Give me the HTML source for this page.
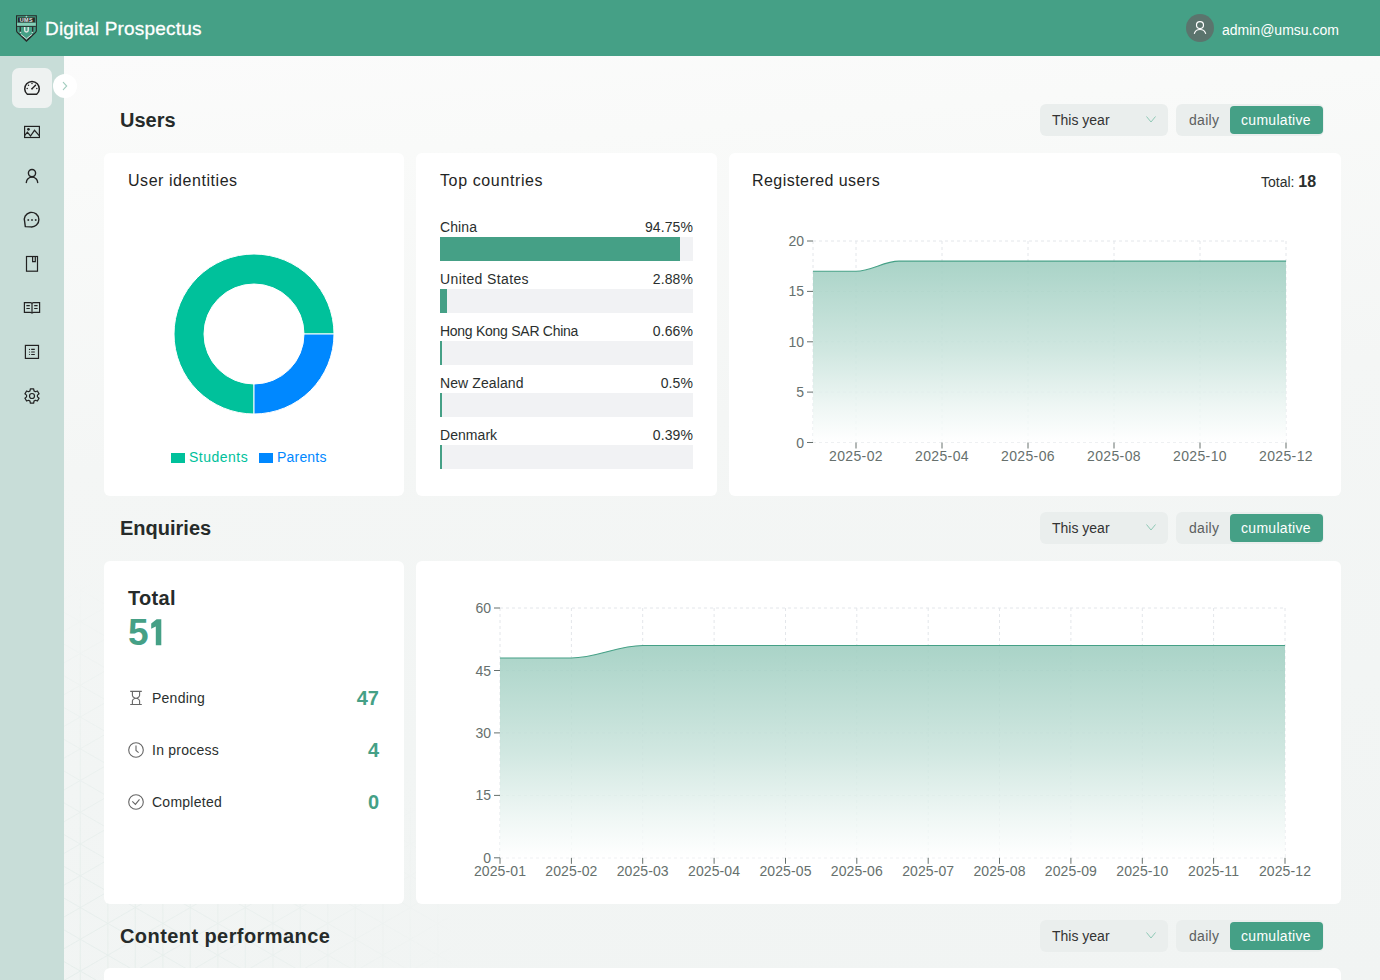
<!DOCTYPE html>
<html><head><meta charset="utf-8"><title>Digital Prospectus</title>
<style>
*{box-sizing:border-box;margin:0;padding:0}
html,body{width:1380px;height:980px;overflow:hidden}
body{font-family:"Liberation Sans",sans-serif;color:#1f2524;background:#f5f7f6;position:relative}
.abs{position:absolute}
#hdr{left:0;top:0;width:1380px;height:56px;background:#45a086}
#side{left:0;top:56px;width:64px;height:924px;background:#c8ddd8}
#main{left:64px;top:56px;width:1316px;height:924px;background:linear-gradient(175deg,#fbfbfb 0%,#f9faf9 12%,#f4f6f5 40%,#f2f5f4 70%,#f1f4f3 100%)}
.card{position:absolute;background:#fff;border-radius:6px}
.t{position:absolute;white-space:nowrap;line-height:1}
.sec{font-size:20px;font-weight:bold;color:#262b2a}
.ctitle{font-size:16px;color:#1f2524;letter-spacing:0.45px}
.sel{position:absolute;width:128px;height:32px;background:#eaeeed;border-radius:6px}
.seg{position:absolute;width:148px;height:32px;background:#eaeeed;border-radius:6px}
.cum{position:absolute;left:54px;top:2px;width:93px;height:28px;background:#45a086;border-radius:4px}
.lbl{font-size:14px;color:#2a2f2e;letter-spacing:0.1px}
.pct{font-size:14px;color:#2a2f2e;letter-spacing:0.1px;text-align:right}
</style></head><body>
<div id="hdr" class="abs"></div><div id="side" class="abs"></div><div id="main" class="abs"></div>
<div class="t" style="left:45px;top:19px;font-size:19px;color:#fff;letter-spacing:0.2px;-webkit-text-stroke:0.3px #fff">Digital Prospectus</div>
<div class="abs" style="left:1186px;top:14px;width:28px;height:28px;border-radius:50%;background:#5b746d"></div>
<div class="t" style="left:1222px;top:23px;font-size:14px;color:#fff">admin@umsu.com</div>
<div class="abs" style="left:12px;top:68px;width:40px;height:40px;border-radius:7px;background:#eef2f1"></div>
<div class="abs" style="left:53px;top:74px;width:24px;height:24px;border-radius:50%;background:#fff"></div>
<svg class="abs" style="left:0;top:0" width="1380" height="980"><defs><radialGradient id="pm" cx="64" cy="980" r="400" gradientUnits="userSpaceOnUse"><stop offset="0" stop-color="#fff" stop-opacity="1"/><stop offset="0.55" stop-color="#fff" stop-opacity="0.6"/><stop offset="1" stop-color="#fff" stop-opacity="0"/></radialGradient><mask id="pmask"><rect x="0" y="0" width="1380" height="980" fill="url(#pm)"/></mask></defs><path d="M80.3 400V980 M107.8 400V980 M135.3 400V980 M162.8 400V980 M190.3 400V980 M217.8 400V980 M245.3 400V980 M272.8 400V980 M300.3 400V980 M327.8 400V980 M355.3 400V980 M382.8 400V980 M410.3 400V980 M437.8 400V980 M465.3 400V980 M492.8 400V980 M520.3 400V980 M547.8 400V980 M64 72.5L560 358.9 M64 104.3L560 390.6 M64 136.0L560 422.4 M64 167.8L560 454.1 M64 199.5L560 485.9 M64 231.3L560 517.7 M64 263.0L560 549.4 M64 294.8L560 581.2 M64 326.6L560 612.9 M64 358.3L560 644.7 M64 377.1L560 90.8 M64 390.1L560 676.4 M64 408.9L560 122.5 M64 421.8L560 708.2 M64 440.6L560 154.3 M64 453.6L560 739.9 M64 472.4L560 186.0 M64 485.3L560 771.7 M64 504.1L560 217.8 M64 517.1L560 803.4 M64 535.9L560 249.5 M64 548.8L560 835.2 M64 567.7L560 281.3 M64 580.6L560 867.0 M64 599.4L560 313.0 M64 612.3L560 898.7 M64 631.2L560 344.8 M64 644.1L560 930.5 M64 662.9L560 376.6 M64 675.9L560 962.2 M64 694.7L560 408.3 M64 707.6L560 994.0 M64 726.4L560 440.1 M64 739.4L560 1025.7 M64 758.2L560 471.8 M64 771.1L560 1057.5 M64 789.9L560 503.6 M64 802.9L560 1089.2 M64 821.7L560 535.3 M64 834.6L560 1121.0 M64 853.4L560 567.1 M64 866.4L560 1152.7 M64 885.2L560 598.8 M64 898.1L560 1184.5 M64 917.0L560 630.6 M64 929.9L560 1216.3 M64 948.7L560 662.3 M64 961.6L560 1248.0 M64 980.5L560 694.1 M64 993.4L560 1279.8 M64 1012.2L560 725.9 M64 1025.1L560 1311.5 M64 1044.0L560 757.6 M64 1075.7L560 789.4 M64 1107.5L560 821.1 M64 1139.2L560 852.9 M64 1171.0L560 884.6 M64 1202.7L560 916.4 M64 1234.5L560 948.1 M64 1266.3L560 979.9 M64 1298.0L560 1011.6" stroke="#e3ecea" stroke-width="0.8" fill="none" mask="url(#pmask)"/></svg>
<div class="t sec" style="left:120px;top:110px;letter-spacing:0px">Users</div>
<div class="sel" style="left:1040px;top:104px"></div>
<div class="t" style="left:1052px;top:113px;font-size:14px;color:#333">This year</div>
<div class="seg" style="left:1176px;top:104px"><div class="cum"></div></div>
<div class="t" style="left:1189px;top:113px;font-size:14px;color:#5c605f;letter-spacing:0.3px">daily</div>
<div class="t" style="left:1241px;top:113px;font-size:14px;color:#fff;letter-spacing:0.3px">cumulative</div>
<div class="card" style="left:104px;top:152.5px;width:300.25px;height:343.5px"></div>
<div class="card" style="left:416.25px;top:152.5px;width:300.25px;height:343.5px"></div>
<div class="card" style="left:728.5px;top:152.5px;width:612.5px;height:343.5px"></div>
<div class="t ctitle" style="left:128px;top:173px;letter-spacing:0.55px">User identities</div>
<div class="t ctitle" style="left:440px;top:173px;letter-spacing:0.62px">Top countries</div>
<div class="t ctitle" style="left:752px;top:173px">Registered users</div>
<div class="t" style="left:1261px;top:174px;font-size:14px;color:#2a2f2e">Total: <b style="font-size:16px">18</b></div>
<div class="t lbl" style="left:440px;top:220px;letter-spacing:0.1px">China</div>
<div class="t pct" style="left:593px;width:100px;top:220px">94.75%</div>
<div class="abs" style="left:440px;top:237px;width:253px;height:24px;background:#f1f2f4"></div>
<div class="abs" style="left:440px;top:237px;width:239.72px;height:24px;background:#45a086"></div>
<div class="t lbl" style="left:440px;top:272px;letter-spacing:0.38px">United States</div>
<div class="t pct" style="left:593px;width:100px;top:272px">2.88%</div>
<div class="abs" style="left:440px;top:289px;width:253px;height:24px;background:#f1f2f4"></div>
<div class="abs" style="left:440px;top:289px;width:7.29px;height:24px;background:#45a086"></div>
<div class="t lbl" style="left:440px;top:324px;letter-spacing:-0.27px">Hong Kong SAR China</div>
<div class="t pct" style="left:593px;width:100px;top:324px">0.66%</div>
<div class="abs" style="left:440px;top:341px;width:253px;height:24px;background:#f1f2f4"></div>
<div class="abs" style="left:440px;top:341px;width:1.67px;height:24px;background:#45a086"></div>
<div class="t lbl" style="left:440px;top:376px;letter-spacing:0.1px">New Zealand</div>
<div class="t pct" style="left:593px;width:100px;top:376px">0.5%</div>
<div class="abs" style="left:440px;top:393px;width:253px;height:24px;background:#f1f2f4"></div>
<div class="abs" style="left:440px;top:393px;width:1.50px;height:24px;background:#45a086"></div>
<div class="t lbl" style="left:440px;top:428px;letter-spacing:0.05px">Denmark</div>
<div class="t pct" style="left:593px;width:100px;top:428px">0.39%</div>
<div class="abs" style="left:440px;top:445px;width:253px;height:24px;background:#f1f2f4"></div>
<div class="abs" style="left:440px;top:445px;width:1.50px;height:24px;background:#45a086"></div>
<div class="abs" style="left:171px;top:453px;width:14px;height:10px;background:#00c19b"></div>
<div class="t" style="left:189px;top:450px;font-size:14px;color:#00c19b;letter-spacing:0.5px">Students</div>
<div class="abs" style="left:259px;top:453px;width:14px;height:10px;background:#0088ff"></div>
<div class="t" style="left:277px;top:450px;font-size:14px;color:#0088ff;letter-spacing:0.2px">Parents</div>
<div class="t sec" style="left:120px;top:518px;letter-spacing:0px">Enquiries</div>
<div class="sel" style="left:1040px;top:512px"></div>
<div class="t" style="left:1052px;top:521px;font-size:14px;color:#333">This year</div>
<div class="seg" style="left:1176px;top:512px"><div class="cum"></div></div>
<div class="t" style="left:1189px;top:521px;font-size:14px;color:#5c605f;letter-spacing:0.3px">daily</div>
<div class="t" style="left:1241px;top:521px;font-size:14px;color:#fff;letter-spacing:0.3px">cumulative</div>
<div class="card" style="left:104px;top:560.5px;width:300.25px;height:343.5px"></div>
<div class="card" style="left:416.25px;top:560.5px;width:924.75px;height:343.5px"></div>
<div class="t" style="left:128px;top:588px;font-size:20px;font-weight:bold;letter-spacing:0.3px;color:#262b2a">Total</div>
<div class="t" style="left:128px;top:614px;font-size:37px;font-weight:bold;color:#45a086">5</div>
<svg class="abs" style="left:0;top:0" width="400" height="700"><path d="M156.6 619.3 H161.3 V645.3 H155.8 V626.4 L151.2 628.7 V623.5 Z" fill="#45a086"/></svg>
<div class="t" style="left:152px;top:691px;font-size:14px;color:#2a2f2e;letter-spacing:0.25px">Pending</div>
<div class="t" style="left:279px;width:100px;text-align:right;top:688px;font-size:20px;font-weight:bold;color:#45a086">47</div>
<div class="t" style="left:152px;top:743px;font-size:14px;color:#2a2f2e;letter-spacing:0.25px">In process</div>
<div class="t" style="left:279px;width:100px;text-align:right;top:740px;font-size:20px;font-weight:bold;color:#45a086">4</div>
<div class="t" style="left:152px;top:795px;font-size:14px;color:#2a2f2e;letter-spacing:0.25px">Completed</div>
<div class="t" style="left:279px;width:100px;text-align:right;top:792px;font-size:20px;font-weight:bold;color:#45a086">0</div>
<div class="t sec" style="left:120px;top:926px;letter-spacing:0.42px">Content performance</div>
<div class="sel" style="left:1040px;top:920px"></div>
<div class="t" style="left:1052px;top:929px;font-size:14px;color:#333">This year</div>
<div class="seg" style="left:1176px;top:920px"><div class="cum"></div></div>
<div class="t" style="left:1189px;top:929px;font-size:14px;color:#5c605f;letter-spacing:0.3px">daily</div>
<div class="t" style="left:1241px;top:929px;font-size:14px;color:#fff;letter-spacing:0.3px">cumulative</div>
<div class="card" style="left:104px;top:968px;width:1237px;height:40px"></div>
<svg class="abs" style="left:0;top:0" width="1380" height="980" viewBox="0 0 1380 980">
<defs><linearGradient id="ag" x1="0" y1="0" x2="0" y2="1"><stop offset="0" stop-color="#45a086" stop-opacity="0.46"/><stop offset="0.5" stop-color="#45a086" stop-opacity="0.25"/><stop offset="0.8" stop-color="#45a086" stop-opacity="0.09"/><stop offset="1" stop-color="#45a086" stop-opacity="0"/></linearGradient></defs>
<path d="M254 414 A80 80 0 1 1 334 334 L304 334 A50 50 0 1 0 254 384 Z" fill="#00c19b" stroke="#fff" stroke-width="1"/>
<path d="M334 334 A80 80 0 0 1 254 414 L254 384 A50 50 0 0 0 304 334 Z" fill="#0088ff" stroke="#fff" stroke-width="1"/>
<line x1="813.0" y1="241" x2="813.0" y2="442.5" stroke="#e3e6ea" stroke-dasharray="3 3"/>
<line x1="856.0" y1="241" x2="856.0" y2="442.5" stroke="#e3e6ea" stroke-dasharray="3 3"/>
<line x1="942.0" y1="241" x2="942.0" y2="442.5" stroke="#e3e6ea" stroke-dasharray="3 3"/>
<line x1="1028.0" y1="241" x2="1028.0" y2="442.5" stroke="#e3e6ea" stroke-dasharray="3 3"/>
<line x1="1114.0" y1="241" x2="1114.0" y2="442.5" stroke="#e3e6ea" stroke-dasharray="3 3"/>
<line x1="1200.0" y1="241" x2="1200.0" y2="442.5" stroke="#e3e6ea" stroke-dasharray="3 3"/>
<line x1="1286.0" y1="241" x2="1286.0" y2="442.5" stroke="#e3e6ea" stroke-dasharray="3 3"/>
<line x1="813" y1="442.5" x2="1286" y2="442.5" stroke="#e3e6ea" stroke-dasharray="3 3"/>
<line x1="813" y1="392.1" x2="1286" y2="392.1" stroke="#e3e6ea" stroke-dasharray="3 3"/>
<line x1="813" y1="341.8" x2="1286" y2="341.8" stroke="#e3e6ea" stroke-dasharray="3 3"/>
<line x1="813" y1="291.4" x2="1286" y2="291.4" stroke="#e3e6ea" stroke-dasharray="3 3"/>
<line x1="813" y1="241.0" x2="1286" y2="241.0" stroke="#e3e6ea" stroke-dasharray="3 3"/>
<path d="M813.00 271.23 C828.05 271.23 840.95 271.23 856.00 271.23 C871.05 271.23 883.95 261.15 899.00 261.15 C914.05 261.15 926.95 261.15 942.00 261.15 C957.05 261.15 969.95 261.15 985.00 261.15 C1000.05 261.15 1012.95 261.15 1028.00 261.15 C1043.05 261.15 1055.95 261.15 1071.00 261.15 C1086.05 261.15 1098.95 261.15 1114.00 261.15 C1129.05 261.15 1141.95 261.15 1157.00 261.15 C1172.05 261.15 1184.95 261.15 1200.00 261.15 C1215.05 261.15 1227.95 261.15 1243.00 261.15 C1258.05 261.15 1270.95 261.15 1286.00 261.15 L1286 442.5 L813 442.5 Z" fill="#fff" fill-opacity="0.8"/>
<path d="M813.00 271.23 C828.05 271.23 840.95 271.23 856.00 271.23 C871.05 271.23 883.95 261.15 899.00 261.15 C914.05 261.15 926.95 261.15 942.00 261.15 C957.05 261.15 969.95 261.15 985.00 261.15 C1000.05 261.15 1012.95 261.15 1028.00 261.15 C1043.05 261.15 1055.95 261.15 1071.00 261.15 C1086.05 261.15 1098.95 261.15 1114.00 261.15 C1129.05 261.15 1141.95 261.15 1157.00 261.15 C1172.05 261.15 1184.95 261.15 1200.00 261.15 C1215.05 261.15 1227.95 261.15 1243.00 261.15 C1258.05 261.15 1270.95 261.15 1286.00 261.15 L1286 442.5 L813 442.5 Z" fill="url(#ag)"/>
<path d="M813.00 271.23 C828.05 271.23 840.95 271.23 856.00 271.23 C871.05 271.23 883.95 261.15 899.00 261.15 C914.05 261.15 926.95 261.15 942.00 261.15 C957.05 261.15 969.95 261.15 985.00 261.15 C1000.05 261.15 1012.95 261.15 1028.00 261.15 C1043.05 261.15 1055.95 261.15 1071.00 261.15 C1086.05 261.15 1098.95 261.15 1114.00 261.15 C1129.05 261.15 1141.95 261.15 1157.00 261.15 C1172.05 261.15 1184.95 261.15 1200.00 261.15 C1215.05 261.15 1227.95 261.15 1243.00 261.15 C1258.05 261.15 1270.95 261.15 1286.00 261.15" fill="none" stroke="#45a086" stroke-width="1.15"/>
<line x1="807" y1="442.5" x2="813" y2="442.5" stroke="#66706d"/>
<text x="804" y="447.5" text-anchor="end" font-size="14" fill="#66706d" font-family="Liberation Sans">0</text>
<line x1="807" y1="392.1" x2="813" y2="392.1" stroke="#66706d"/>
<text x="804" y="397.1" text-anchor="end" font-size="14" fill="#66706d" font-family="Liberation Sans">5</text>
<line x1="807" y1="341.8" x2="813" y2="341.8" stroke="#66706d"/>
<text x="804" y="346.8" text-anchor="end" font-size="14" fill="#66706d" font-family="Liberation Sans">10</text>
<line x1="807" y1="291.4" x2="813" y2="291.4" stroke="#66706d"/>
<text x="804" y="296.4" text-anchor="end" font-size="14" fill="#66706d" font-family="Liberation Sans">15</text>
<line x1="807" y1="241.0" x2="813" y2="241.0" stroke="#66706d"/>
<text x="804" y="246.0" text-anchor="end" font-size="14" fill="#66706d" font-family="Liberation Sans">20</text>
<line x1="856.0" y1="442.5" x2="856.0" y2="448.5" stroke="#66706d"/>
<text x="856.0" y="461" text-anchor="middle" font-size="14" letter-spacing="0.35" fill="#66706d" font-family="Liberation Sans">2025-02</text>
<line x1="942.0" y1="442.5" x2="942.0" y2="448.5" stroke="#66706d"/>
<text x="942.0" y="461" text-anchor="middle" font-size="14" letter-spacing="0.35" fill="#66706d" font-family="Liberation Sans">2025-04</text>
<line x1="1028.0" y1="442.5" x2="1028.0" y2="448.5" stroke="#66706d"/>
<text x="1028.0" y="461" text-anchor="middle" font-size="14" letter-spacing="0.35" fill="#66706d" font-family="Liberation Sans">2025-06</text>
<line x1="1114.0" y1="442.5" x2="1114.0" y2="448.5" stroke="#66706d"/>
<text x="1114.0" y="461" text-anchor="middle" font-size="14" letter-spacing="0.35" fill="#66706d" font-family="Liberation Sans">2025-08</text>
<line x1="1200.0" y1="442.5" x2="1200.0" y2="448.5" stroke="#66706d"/>
<text x="1200.0" y="461" text-anchor="middle" font-size="14" letter-spacing="0.35" fill="#66706d" font-family="Liberation Sans">2025-10</text>
<line x1="1286.0" y1="442.5" x2="1286.0" y2="448.5" stroke="#66706d"/>
<text x="1286.0" y="461" text-anchor="middle" font-size="14" letter-spacing="0.35" fill="#66706d" font-family="Liberation Sans">2025-12</text>
<line x1="500.0" y1="608" x2="500.0" y2="857.8" stroke="#e3e6ea" stroke-dasharray="3 3"/>
<line x1="571.4" y1="608" x2="571.4" y2="857.8" stroke="#e3e6ea" stroke-dasharray="3 3"/>
<line x1="642.7" y1="608" x2="642.7" y2="857.8" stroke="#e3e6ea" stroke-dasharray="3 3"/>
<line x1="714.1" y1="608" x2="714.1" y2="857.8" stroke="#e3e6ea" stroke-dasharray="3 3"/>
<line x1="785.5" y1="608" x2="785.5" y2="857.8" stroke="#e3e6ea" stroke-dasharray="3 3"/>
<line x1="856.8" y1="608" x2="856.8" y2="857.8" stroke="#e3e6ea" stroke-dasharray="3 3"/>
<line x1="928.2" y1="608" x2="928.2" y2="857.8" stroke="#e3e6ea" stroke-dasharray="3 3"/>
<line x1="999.5" y1="608" x2="999.5" y2="857.8" stroke="#e3e6ea" stroke-dasharray="3 3"/>
<line x1="1070.9" y1="608" x2="1070.9" y2="857.8" stroke="#e3e6ea" stroke-dasharray="3 3"/>
<line x1="1142.3" y1="608" x2="1142.3" y2="857.8" stroke="#e3e6ea" stroke-dasharray="3 3"/>
<line x1="1213.6" y1="608" x2="1213.6" y2="857.8" stroke="#e3e6ea" stroke-dasharray="3 3"/>
<line x1="1285.0" y1="608" x2="1285.0" y2="857.8" stroke="#e3e6ea" stroke-dasharray="3 3"/>
<line x1="500" y1="857.8" x2="1285" y2="857.8" stroke="#e3e6ea" stroke-dasharray="3 3"/>
<line x1="500" y1="795.4" x2="1285" y2="795.4" stroke="#e3e6ea" stroke-dasharray="3 3"/>
<line x1="500" y1="732.9" x2="1285" y2="732.9" stroke="#e3e6ea" stroke-dasharray="3 3"/>
<line x1="500" y1="670.5" x2="1285" y2="670.5" stroke="#e3e6ea" stroke-dasharray="3 3"/>
<line x1="500" y1="608.0" x2="1285" y2="608.0" stroke="#e3e6ea" stroke-dasharray="3 3"/>
<path d="M500.00 657.96 C524.98 657.96 546.39 657.96 571.36 657.96 C596.34 657.96 617.75 645.47 642.73 645.47 C667.70 645.47 689.11 645.47 714.09 645.47 C739.07 645.47 760.48 645.47 785.45 645.47 C810.43 645.47 831.84 645.47 856.82 645.47 C881.80 645.47 903.20 645.47 928.18 645.47 C953.16 645.47 974.57 645.47 999.55 645.47 C1024.52 645.47 1045.93 645.47 1070.91 645.47 C1095.89 645.47 1117.30 645.47 1142.27 645.47 C1167.25 645.47 1188.66 645.47 1213.64 645.47 C1238.61 645.47 1260.02 645.47 1285.00 645.47 L1285 857.8 L500 857.8 Z" fill="#fff" fill-opacity="0.8"/>
<path d="M500.00 657.96 C524.98 657.96 546.39 657.96 571.36 657.96 C596.34 657.96 617.75 645.47 642.73 645.47 C667.70 645.47 689.11 645.47 714.09 645.47 C739.07 645.47 760.48 645.47 785.45 645.47 C810.43 645.47 831.84 645.47 856.82 645.47 C881.80 645.47 903.20 645.47 928.18 645.47 C953.16 645.47 974.57 645.47 999.55 645.47 C1024.52 645.47 1045.93 645.47 1070.91 645.47 C1095.89 645.47 1117.30 645.47 1142.27 645.47 C1167.25 645.47 1188.66 645.47 1213.64 645.47 C1238.61 645.47 1260.02 645.47 1285.00 645.47 L1285 857.8 L500 857.8 Z" fill="url(#ag)"/>
<path d="M500.00 657.96 C524.98 657.96 546.39 657.96 571.36 657.96 C596.34 657.96 617.75 645.47 642.73 645.47 C667.70 645.47 689.11 645.47 714.09 645.47 C739.07 645.47 760.48 645.47 785.45 645.47 C810.43 645.47 831.84 645.47 856.82 645.47 C881.80 645.47 903.20 645.47 928.18 645.47 C953.16 645.47 974.57 645.47 999.55 645.47 C1024.52 645.47 1045.93 645.47 1070.91 645.47 C1095.89 645.47 1117.30 645.47 1142.27 645.47 C1167.25 645.47 1188.66 645.47 1213.64 645.47 C1238.61 645.47 1260.02 645.47 1285.00 645.47" fill="none" stroke="#45a086" stroke-width="1.15"/>
<line x1="494" y1="857.8" x2="500" y2="857.8" stroke="#66706d"/>
<text x="491" y="862.8" text-anchor="end" font-size="14" fill="#66706d" font-family="Liberation Sans">0</text>
<line x1="494" y1="795.4" x2="500" y2="795.4" stroke="#66706d"/>
<text x="491" y="800.4" text-anchor="end" font-size="14" fill="#66706d" font-family="Liberation Sans">15</text>
<line x1="494" y1="732.9" x2="500" y2="732.9" stroke="#66706d"/>
<text x="491" y="737.9" text-anchor="end" font-size="14" fill="#66706d" font-family="Liberation Sans">30</text>
<line x1="494" y1="670.5" x2="500" y2="670.5" stroke="#66706d"/>
<text x="491" y="675.5" text-anchor="end" font-size="14" fill="#66706d" font-family="Liberation Sans">45</text>
<line x1="494" y1="608.0" x2="500" y2="608.0" stroke="#66706d"/>
<text x="491" y="613.0" text-anchor="end" font-size="14" fill="#66706d" font-family="Liberation Sans">60</text>
<line x1="500.0" y1="857.8" x2="500.0" y2="863.8" stroke="#66706d"/>
<text x="500.0" y="876" text-anchor="middle" font-size="14" letter-spacing="0.1" fill="#66706d" font-family="Liberation Sans">2025-01</text>
<line x1="571.4" y1="857.8" x2="571.4" y2="863.8" stroke="#66706d"/>
<text x="571.4" y="876" text-anchor="middle" font-size="14" letter-spacing="0.1" fill="#66706d" font-family="Liberation Sans">2025-02</text>
<line x1="642.7" y1="857.8" x2="642.7" y2="863.8" stroke="#66706d"/>
<text x="642.7" y="876" text-anchor="middle" font-size="14" letter-spacing="0.1" fill="#66706d" font-family="Liberation Sans">2025-03</text>
<line x1="714.1" y1="857.8" x2="714.1" y2="863.8" stroke="#66706d"/>
<text x="714.1" y="876" text-anchor="middle" font-size="14" letter-spacing="0.1" fill="#66706d" font-family="Liberation Sans">2025-04</text>
<line x1="785.5" y1="857.8" x2="785.5" y2="863.8" stroke="#66706d"/>
<text x="785.5" y="876" text-anchor="middle" font-size="14" letter-spacing="0.1" fill="#66706d" font-family="Liberation Sans">2025-05</text>
<line x1="856.8" y1="857.8" x2="856.8" y2="863.8" stroke="#66706d"/>
<text x="856.8" y="876" text-anchor="middle" font-size="14" letter-spacing="0.1" fill="#66706d" font-family="Liberation Sans">2025-06</text>
<line x1="928.2" y1="857.8" x2="928.2" y2="863.8" stroke="#66706d"/>
<text x="928.2" y="876" text-anchor="middle" font-size="14" letter-spacing="0.1" fill="#66706d" font-family="Liberation Sans">2025-07</text>
<line x1="999.5" y1="857.8" x2="999.5" y2="863.8" stroke="#66706d"/>
<text x="999.5" y="876" text-anchor="middle" font-size="14" letter-spacing="0.1" fill="#66706d" font-family="Liberation Sans">2025-08</text>
<line x1="1070.9" y1="857.8" x2="1070.9" y2="863.8" stroke="#66706d"/>
<text x="1070.9" y="876" text-anchor="middle" font-size="14" letter-spacing="0.1" fill="#66706d" font-family="Liberation Sans">2025-09</text>
<line x1="1142.3" y1="857.8" x2="1142.3" y2="863.8" stroke="#66706d"/>
<text x="1142.3" y="876" text-anchor="middle" font-size="14" letter-spacing="0.1" fill="#66706d" font-family="Liberation Sans">2025-10</text>
<line x1="1213.6" y1="857.8" x2="1213.6" y2="863.8" stroke="#66706d"/>
<text x="1213.6" y="876" text-anchor="middle" font-size="14" letter-spacing="0.1" fill="#66706d" font-family="Liberation Sans">2025-11</text>
<line x1="1285.0" y1="857.8" x2="1285.0" y2="863.8" stroke="#66706d"/>
<text x="1285.0" y="876" text-anchor="middle" font-size="14" letter-spacing="0.1" fill="#66706d" font-family="Liberation Sans">2025-12</text>
<g fill="none" stroke="#222" stroke-width="1.3" stroke-linecap="round" stroke-linejoin="round">
<path d="M27.3 94.3 A7.3 7.3 0 1 1 36.7 94.3 Z" stroke-width="1.5"/>
<path d="M32 88.8 L35.3 85.6" stroke-width="1.4"/>
</g>
<g fill="#222">
<circle cx="32" cy="83.6" r="0.75"/>
<circle cx="28.5" cy="85.3" r="0.75"/>
<circle cx="35.5" cy="85.3" r="0.75"/>
<circle cx="27.2" cy="88.6" r="0.75"/>
<circle cx="36.8" cy="88.6" r="0.75"/>
<circle cx="32" cy="88.8" r="0.75"/>
</g>
<g fill="none" stroke="#222" stroke-width="1.2" stroke-linejoin="miter">
<rect x="24.6" y="126.4" width="14.8" height="11.1"/>
<polyline points="24.8,135.3 27.4,132.2 30.5,136 34.5,130.3 39.2,135.6"/>
</g>
<circle cx="28.45" cy="129.3" r="1.35" fill="#222"/>
<g fill="none" stroke="#222" stroke-width="1.4" stroke-linecap="round">
<circle cx="32" cy="173.1" r="3.6"/>
<path d="M26.3 182.6 A5.7 5.5 0 0 1 37.7 182.6"/>
<path d="M24.75 222.3 A7.3 7.3 0 1 1 30.6 226.9 L25.3 226.6 Z" stroke-linejoin="round"/>
</g>
<g fill="#222">
<rect x="27.5" y="219.2" width="1.6" height="1.6"/>
<rect x="31.2" y="219.2" width="1.6" height="1.6"/>
<rect x="34.900000000000006" y="219.2" width="1.6" height="1.6"/>
</g>
<g fill="none" stroke="#222" stroke-width="1.2">
<rect x="26.5" y="256.5" width="11" height="14.7"/>
<path d="M32.6 256.5 V261.7 H35.3 V256.5"/>
<path d="M24.4 302.6 H30.5 Q32 302.6 32 304 Q32 302.6 33.5 302.6 H39.6 V312.4 H33.5 Q32 312.4 32 313.4 Q32 312.4 30.5 312.4 H24.4 Z"/>
<path d="M32 304 V312.8"/>
<path d="M26.4 305.6 H29.8 M26.4 308.5 H29.8 M34.2 305.6 H37.6 M34.2 308.5 H37.6"/>
<rect x="25.4" y="345.4" width="13.1" height="13"/>
<path d="M31.2 349.4 H34.8 M31.2 352 H34.8 M31.2 354.5 H34.8"/>
</g>
<g fill="#222">
<circle cx="29.5" cy="349.4" r="0.6"/>
<circle cx="29.5" cy="352" r="0.6"/>
<circle cx="29.5" cy="354.5" r="0.6"/>
</g>
<path d="M37.43 395.14 L39.08 393.84 L37.41 390.95 L35.46 391.73 L33.97 390.87 L33.66 388.79 L30.34 388.79 L30.03 390.87 L28.54 391.73 L26.59 390.95 L24.92 393.84 L26.57 395.14 L26.57 396.86 L24.92 398.16 L26.59 401.05 L28.54 400.27 L30.03 401.13 L30.34 403.21 L33.66 403.21 L33.97 401.13 L35.46 400.27 L37.41 401.05 L39.08 398.16 L37.43 396.86 Z" fill="none" stroke="#222" stroke-width="1.2" stroke-linejoin="round"/>
<circle cx="32" cy="396" r="2.5" fill="none" stroke="#222" stroke-width="1.2"/>
<path d="M63.3 82.4 L66.7 86 L63.3 89.6" fill="none" stroke="#a3cdbf" stroke-width="1.1" stroke-linecap="round"/>
<circle cx="1200" cy="25.1" r="3.5" fill="none" stroke="#fff" stroke-width="1.2"/>
<path d="M1194.4 33.4 A5.8 5.3 0 0 1 1205.6 33.4" fill="none" stroke="#fff" stroke-width="1.2" stroke-linecap="round"/>
<path d="M1146.5 116.5 L1151 122 L1155.5 116.5" fill="none" stroke="#8fc9b6" stroke-width="1"/>
<path d="M1146.5 524.5 L1151 530 L1155.5 524.5" fill="none" stroke="#8fc9b6" stroke-width="1"/>
<path d="M1146.5 932.5 L1151 938 L1155.5 932.5" fill="none" stroke="#8fc9b6" stroke-width="1"/>
<g fill="none" stroke="#666" stroke-width="1.1">
<path d="M130.2 691.4 H141.8 M130.2 704.5 H141.8"/>
<path d="M132.4 691.4 V695.6 Q132.4 697 135 698.2 Q132.4 699.4 132.4 700.8 V704.5 M139.6 691.4 V695.6 Q139.6 697 137 698.2 Q139.6 699.4 139.6 700.8 V704.5"/>
<path d="M135 698.2 H137"/>
<circle cx="136" cy="750" r="7.3"/>
<path d="M136 745.6 V750.5 L138.6 752.6"/>
<circle cx="136" cy="802" r="7.3"/>
<path d="M132.3 801.3 L135.4 804.4 L139.5 799.3"/>
</g>
<g>
<path d="M16.6 15.8 H36.3 V30.8 Q36.3 31.6 35.6 32.3 L26.45 41.2 L17.3 32.3 Q16.6 31.6 16.6 30.8 Z" fill="#45a086" stroke="#262626" stroke-width="1.1"/>
<rect x="18" y="17.4" width="16.9" height="5.2" fill="#262b29"/>
<text x="26.45" y="21.9" text-anchor="middle" font-size="5.4" font-weight="bold" fill="#e6ece9" font-family="Liberation Sans" letter-spacing="0.5">UMS</text>
<rect x="17.1" y="22.8" width="18.7" height="3.1" fill="#86d0b8"/>
<rect x="17.1" y="25.9" width="18.7" height="0.9" fill="#262626"/>
<rect x="19.6" y="26.8" width="1.2" height="5" fill="#262626"/>
<rect x="32.1" y="26.8" width="1.2" height="5" fill="#262626"/>
<path d="M24.7 27.1 V30.3 Q24.7 32 26.45 32 Q28.2 32 28.2 30.3 V27.1" fill="none" stroke="#e2e8e5" stroke-width="1.4"/>
<path d="M18.3 33.2 L26.45 40.3 L34.6 33.2" fill="none" stroke="#2a2a2a" stroke-width="0.9"/>
<path d="M21 34.5 L26.45 38.8 L31.9 34.5" fill="none" stroke="#d5dcd9" stroke-width="1"/>
<circle cx="20.6" cy="32.4" r="0.7" fill="#d5dcd9"/><circle cx="32.3" cy="32.4" r="0.7" fill="#d5dcd9"/>
<circle cx="26.45" cy="16.6" r="0.9" fill="#9fe0cb"/>
</g>
</svg>
</body></html>
